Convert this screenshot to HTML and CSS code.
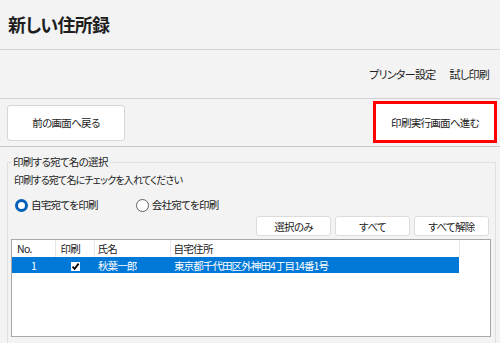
FILE: index.html
```html
<!DOCTYPE html>
<html>
   <head>
      <title>新しい住所録</title>
      <meta charset="utf-8">
      <link rel="stylesheet" href="styles.css">
   </head>
   <body>
      <header class="titlebar">
         <h1>新しい住所録</h1>
      </header>
      <div class="toolbar">
         <span class="link">プリンター設定</span>
         <span class="link">試し印刷</span>
      </div>
      <div class="actions">
         <button class="btn big">前の画面へ戻る</button>
         <div class="highlight">
            <button class="btn big">印刷実行画面へ進む</button>
         </div>
      </div>
      <fieldset class="group">
         <legend>印刷する宛て名の選択</legend>
         <div class="hint">印刷する宛て名にチェックを入れてください</div>
         <div class="radios">
            <label class="radio"><span class="dot checked"></span>自宅宛てを印刷</label>
            <label class="radio"><span class="dot"></span>会社宛てを印刷</label>
         </div>
         <div class="tools">
            <button class="btn small">選択のみ</button>
            <button class="btn small">すべて</button>
            <button class="btn small">すべて解除</button>
         </div>
         <div class="list">
            <table>
               <colgroup>
                  <col style="width:43px">
                  <col style="width:39px">
                  <col style="width:76px">
                  <col style="width:289px">
                  <col>
               </colgroup>
               <thead>
                  <tr>
                     <th>No.</th>
                     <th>印刷</th>
                     <th class="tight">氏名</th>
                     <th class="tight">自宅住所</th>
                     <th class="filler"></th>
                  </tr>
               </thead>
               <tbody>
                  <tr class="selected">
                     <td class="num">1</td>
                     <td class="check"><span class="box">
                        <svg width="9" height="9" viewBox="0 0 9 9"><path d="M1.5 4.6 L3.6 6.8 L7.6 1.6" fill="none" stroke="#000" stroke-width="1.8"></path></svg>
                     </span></td>
                     <td>秋葉一郎</td>
                     <td>東京都千代田区外神田4丁目14番1号</td>
                     <td class="filler"></td>
                  </tr>
               </tbody>
            </table>
         </div>
      </fieldset>
   </body>
</html>
```

FILE: styles.css
```css
*{
    box-sizing: border-box;
    font-family: "Noto Sans CJK JP", sans-serif;
    font-feature-settings: "palt";
}
body{
    margin: 0;
    background: #f3f3f3;
    color: #222;
    font-size: 10.5px;
    letter-spacing: -0.7px;
    overflow: hidden;
}
.titlebar{
    height: 50px;
    display: flex;
    align-items: center;
    padding-left: 8px;
    border-bottom: 1px solid #d4d4d4;
}
h1{
    margin: 0 0 1px 0;
    font-size: 18px;
    font-weight: 700;
    letter-spacing: -0.7px;
    color: #1e1e1e;
}
.toolbar{
    height: 49px;
    display: flex;
    align-items: center;
    justify-content: flex-end;
    gap: 14px;
    padding-right: 11px;
    border-bottom: 1px solid #d0d0d0;
}
.link{
    font-size: 11px;
}
.actions{
    height: 48px;
    display: flex;
    align-items: center;
    justify-content: space-between;
    padding: 0 3px 0 7px;
    border-bottom: 1px solid #c8c8c8;
}
.btn{
    background: #fff;
    border: 1px solid #d6d6d6;
    border-radius: 3px;
    color: #222;
    font-size: 10.5px;
    letter-spacing: -0.7px;
    padding: 0;
    cursor: pointer;
}
.btn.big{
    width: 118px;
    height: 36px;
}
.highlight{
    border: 3px solid #ff0000;
    margin-top: -1px;
}
.highlight .btn{
    border-color: #fff;
    border-radius: 0;
}
.group{
    margin: 7px 4px 0 7px;
    padding: 0 4px 0 3px;
    border: 1px solid #e0e0e0;
    border-bottom: 0;
    min-height: 200px;
}
legend{
    padding: 0 2px;
    margin-left: 0;
    line-height: 16px;
    font-size: 10.5px;
}
.hint{
    padding-left: 3px;
    line-height: 16px;
    margin-top: 2px;
    font-size: 10px;
    letter-spacing: -0.8px;
}
.radios{
    display: flex;
    gap: 38px;
    margin-top: 9px;
    padding-left: 4px;
}
.radio{
    display: flex;
    align-items: center;
    gap: 3px;
    line-height: 16px;
    font-size: 10.5px;
}
.dot{
    width: 13px;
    height: 13px;
    border-radius: 50%;
    border: 1px solid #5f5f5f;
    background: #fff;
}
.dot.checked{
    border: 3.5px solid #005fb8;
}
.tools{
    display: flex;
    justify-content: flex-end;
    gap: 4px;
    margin-top: 3px;
    padding-right: 2px;
}
.btn.small{
    width: 75px;
    height: 20px;
    border-color: #dcdcdc;
}
.list{
    margin-top: 3px;
    height: 98px;
    background: #fff;
    border: 1px solid #a8a8a8;
}
table{
    width: 100%;
    table-layout: fixed;
    border-collapse: collapse;
}
th{
    font-weight: 400;
    text-align: left;
    height: 17px;
    padding: 0 0 0 5px;
    font-size: 10.5px;
    border-right: 1px solid #e8e8e8;
}
th.tight{
    padding-left: 3px;
}
th.filler{
    border-right: 0;
}
td{
    height: 16px;
    padding: 0 0 0 4px;
    font-size: 10.5px;
    letter-spacing: -0.9px;
    white-space: nowrap;
}
tr.selected td{
    background: #0078d7;
    color: #fff;
}
tr.selected td.filler{
    background: #fff;
}
td.num{
    text-align: center;
    padding: 0;
}
td.check{
    text-align: center;
    padding: 0 0 0 2px;
}
.box{
    display: inline-block;
    width: 9px;
    height: 9px;
    background: #fff;
    vertical-align: middle;
    line-height: 0;
}
```
